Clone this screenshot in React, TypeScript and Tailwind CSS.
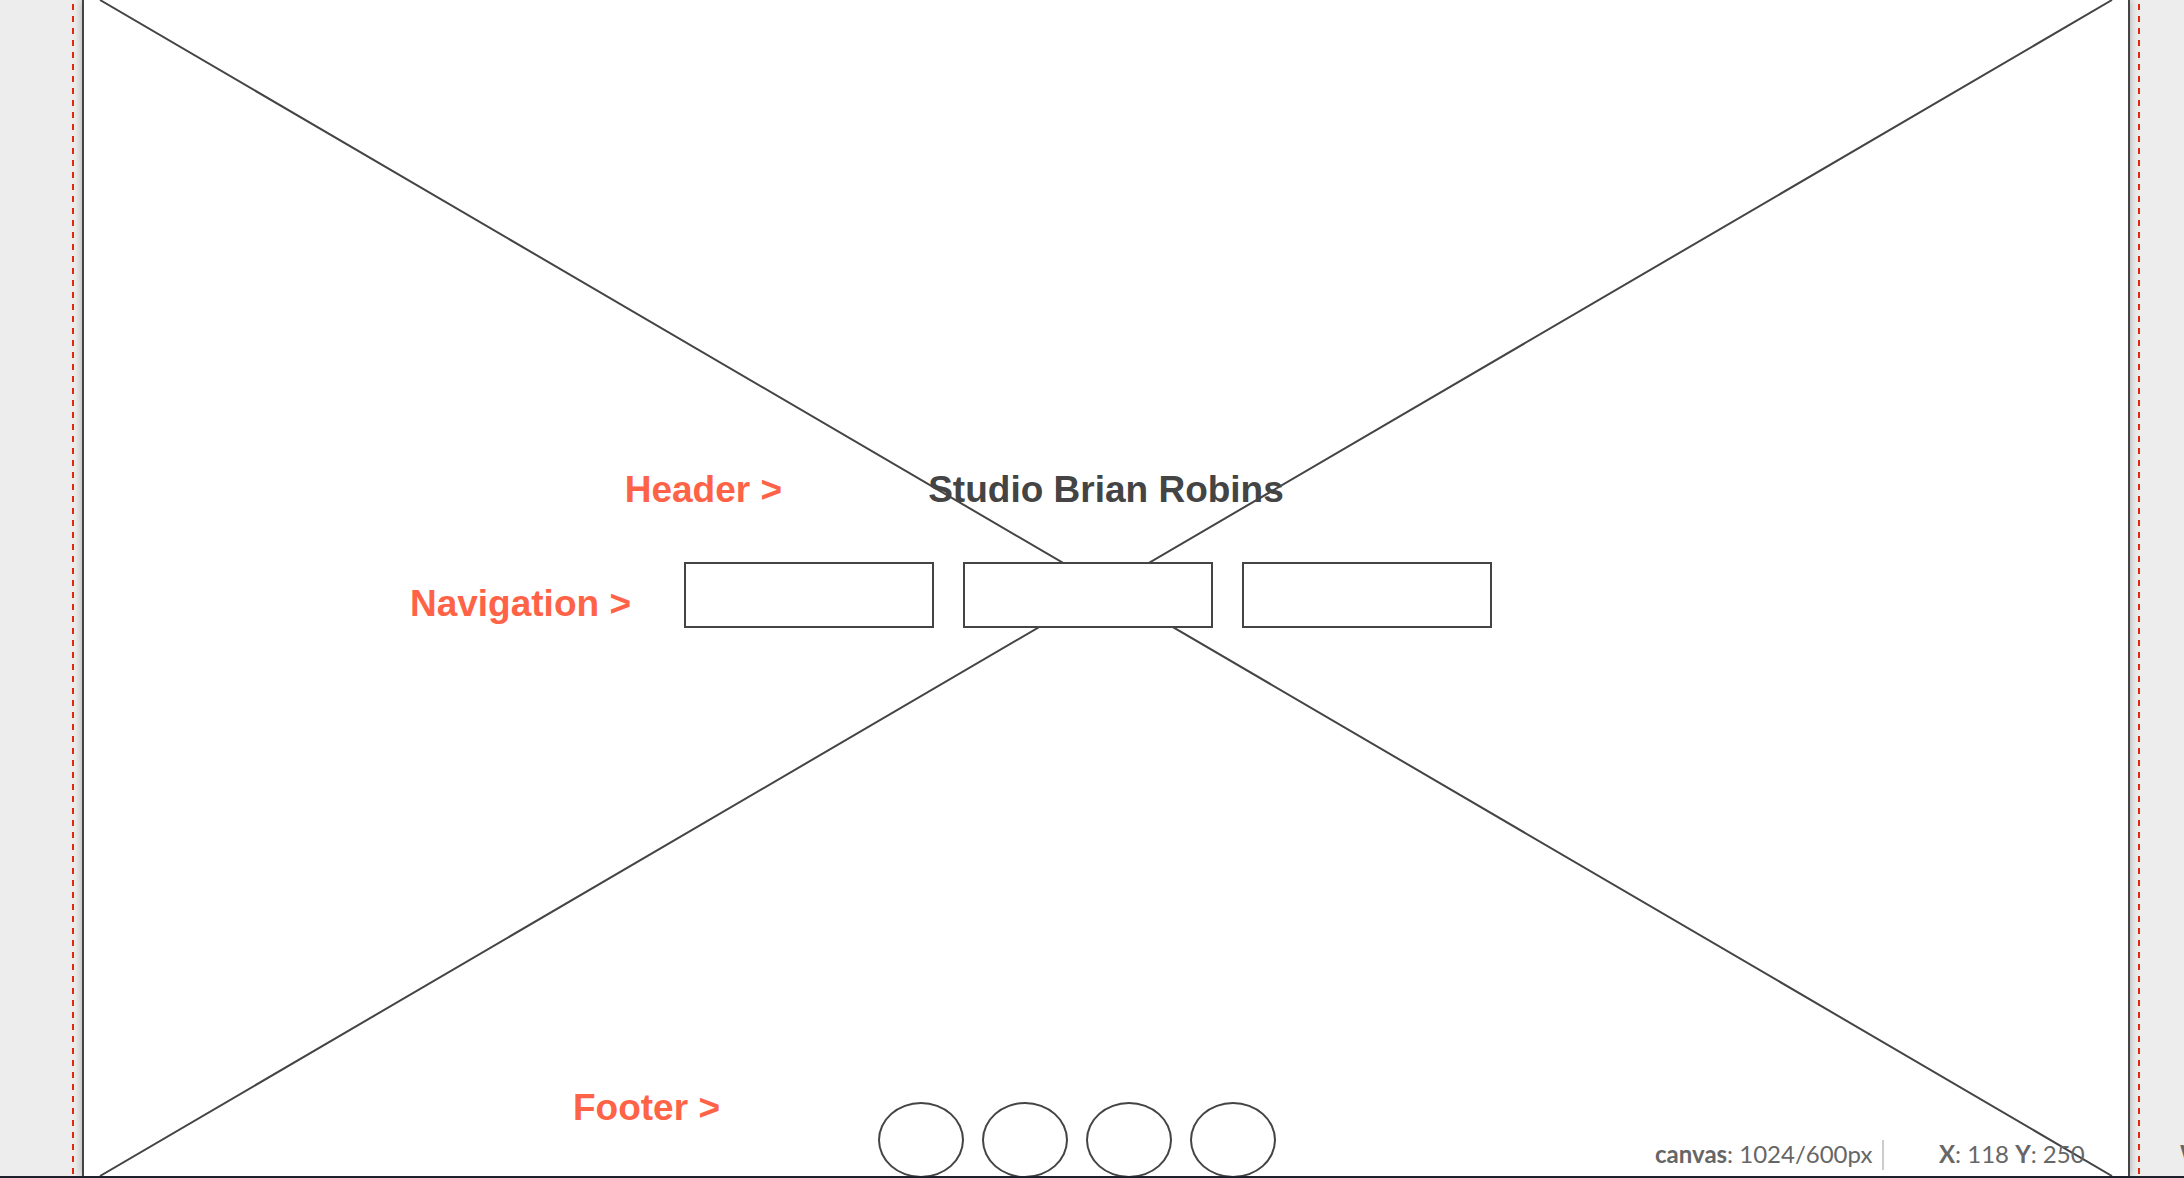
const label = 'text-[37px] font-bold leading-10 text-[#ff6347] text-right whitespace-nowrap';
const ink = 'border-2 border-[#444444]';

function Guide() {
  return (
    <div className="h-full w-[2px] shrink-0 bg-[repeating-linear-gradient(to_bottom,transparent_0,transparent_4px,#e4260b_4px,#e4260b_10px,transparent_10px,transparent_12px)]" />
  );
}

function Readout() {
  return (
    <footer className="absolute right-0 bottom-2 flex h-[30px] w-[529px] items-start whitespace-nowrap font-[Lato,sans-serif] text-2xl leading-7 text-[#666666]">
      <p className="w-[227px] shrink-0">
        <b>canvas</b>: 1024/600px
      </p>
      <span className="h-[30px] w-[2px] shrink-0 bg-[#cccccc]" />
      <p className="ml-[55px] w-[191px] shrink-0">
        <b>X</b>: 118 <b>Y</b>: 250
      </p>
      <span className="h-[30px] w-[2px] shrink-0 bg-[#cccccc]/60" />
      <p className="ml-12 shrink-0">
        <b>W</b>
      </p>
    </footer>
  );
}

export default function App() {
  return (
    <div className="relative flex h-screen flex-col overflow-hidden bg-[#ededed] font-['Liberation_Sans',Arial,sans-serif]">
      <div className="flex min-h-0 flex-1">
        <div className="flex w-[82px] shrink-0 justify-end">
          <Guide />
          <div className="w-2" />
        </div>
        <main className="relative flex min-w-0 flex-1 flex-col border-x-2 border-[#444444] bg-white shadow-[0_0_8px_rgba(0,0,0,0.3)]">
          <svg
            className="absolute inset-0 h-full w-full"
            viewBox="0 0 2044 1176"
            preserveAspectRatio="none"
            stroke="#444444"
            strokeWidth="2"
            aria-hidden="true"
          >
            <path d="M16 0 2028 1176M2028 0 16 1176" fill="none" />
          </svg>

          <header className="relative mt-[470px] grid grid-cols-[1fr_356px_1fr] items-center">
            <p className={`${label} pr-[146px]`}>Header &gt;</p>
            <h1 className="text-center text-[37px] leading-10 font-bold whitespace-nowrap text-[#444444]">
              Studio Brian Robins
            </h1>
          </header>

          <div className="relative mt-[52px] grid grid-cols-[1fr_808px_1fr] pr-9">
            <p className={`${label} mt-[22px] pr-[53px]`}>Navigation &gt;</p>
            <nav className="flex justify-between">
              <a href="#one" aria-label="Section one" className={`${ink} block h-[66px] w-[250px] bg-white`} />
              <a href="#two" aria-label="Section two" className={`${ink} block h-[66px] w-[250px] bg-white`} />
              <a href="#three" aria-label="Section three" className={`${ink} block h-[66px] w-[250px] bg-white`} />
            </nav>
          </div>

          <div className="relative mt-auto grid h-[88px] grid-cols-[1fr_456px_1fr] pr-[58px]">
            <p className={`${label} pr-[129px]`}>Footer &gt;</p>
            <div className="mt-[14px] flex justify-center gap-[18px]">
              <a href="#a" aria-label="Link one" className={`${ink} block h-[76px] w-[86px] rounded-[50%]`} />
              <a href="#b" aria-label="Link two" className={`${ink} block h-[76px] w-[86px] rounded-[50%]`} />
              <a href="#c" aria-label="Link three" className={`${ink} block h-[76px] w-[86px] rounded-[50%]`} />
              <a href="#d" aria-label="Link four" className={`${ink} block h-[76px] w-[86px] rounded-[50%]`} />
            </div>
          </div>
        </main>
        <div className="flex w-[54px] shrink-0">
          <div className="w-2" />
          <Guide />
        </div>
      </div>
      <div className="relative h-[2px] shrink-0 bg-[#20202c]" />
      <Readout />
    </div>
  );
}
